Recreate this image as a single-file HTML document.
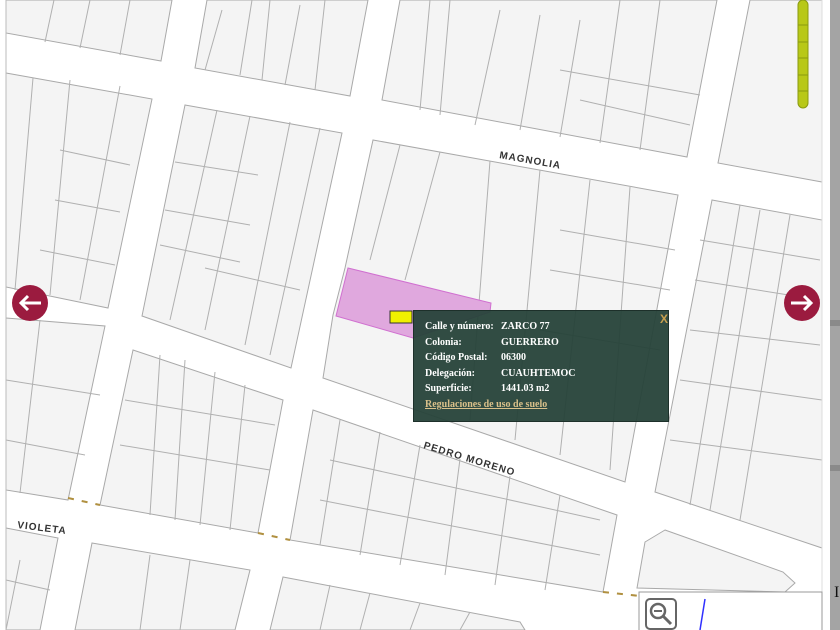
<!DOCTYPE html>
<html><head><meta charset="utf-8"><style>
html,body{margin:0;padding:0;width:840px;height:630px;overflow:hidden;background:#fff;}
#map{position:absolute;left:0;top:0;width:840px;height:630px;}
.pop{position:absolute;left:413px;top:310px;width:256px;height:112px;background:rgba(38,66,57,0.95);border:1px solid #1d302a;box-sizing:border-box;font-family:"Liberation Serif",serif;font-weight:bold;font-size:10px;color:#fff;}
.pop .r{position:absolute;left:11px;white-space:nowrap;}
.pop .v{position:absolute;left:87px;white-space:nowrap;}
.pop a{color:#d9c08a;text-decoration:underline;}
.x{position:absolute;left:246px;top:1px;color:#c8a050;font-size:12px;font-family:"Liberation Sans",sans-serif;font-weight:bold;}
</style></head><body>
<svg id="map" width="840" height="630" viewBox="0 0 840 630">
<rect x="0" y="0" width="840" height="630" fill="#fff"/>
<g fill="#f4f4f4" stroke="#a9a9a9" stroke-width="1">
<polygon points="6,0 172,0 161,61 6,33"/>
<polygon points="207,0 368,0 350,96 195,68"/>
<polygon points="400,0 717,0 687,157 382,100"/>
<polygon points="750,0 822,0 822,182 718,163"/>
<polygon points="6,73 152,99 108,308 6,287"/>
<polygon points="185,105 342,133 291,368 142,316"/>
<polygon points="373,140 678,195 625,482 323,378 333,315 345,268"/>
<polygon points="712,200 822,220 822,548 655,492"/>
<polygon points="6,318 105,326 68,500 6,490"/>
<polygon points="133,350 283,400 258,533 100,505"/>
<polygon points="313,410 617,515 603,592 290,540"/>
<polygon points="6,528 58,538 40,630 6,630"/>
<polygon points="92,543 250,570 235,630 75,630"/>
<polygon points="283,577 520,622 525,630 270,630"/>
<path d="M665,530 L783,572 L795,583 L785,592 L637,588 L645,542 Z"/>
</g>
<g fill="none" stroke="#b0b0b0" stroke-width="1">
<path d="M54,0 L45,42 M90,0 L80,48 M130,0 L120,55 M222,10 L205,70 M252,0 L240,75 M270,0 L262,80 M300,5 L285,85 M325,0 L315,90"/>
<path d="M430,0 L420,110 M450,0 L440,115 M500,10 L475,125 M540,15 L520,130 M580,20 L560,137 M620,0 L600,143 M660,0 L640,150 M560,70 L700,95 M580,100 L690,125"/>
<path d="M33,78 L15,290 M70,80 L50,295 M120,86 L80,300 M60,150 L130,165 M55,200 L120,212 M40,250 L115,265"/>
<path d="M217,110 L170,320 M250,116 L205,330 M290,122 L245,345 M320,128 L270,355 M175,162 L258,175 M165,210 L250,225 M160,245 L240,262 M205,268 L300,290"/>
<path d="M400,145 L370,260 M440,152 L405,280 M490,161 L470,420 M540,170 L515,440 M590,180 L560,455 M630,187 L610,470 M560,230 L675,250 M550,270 L670,290 M540,330 L660,350"/>
<path d="M740,205 L690,505 M760,210 L710,510 M790,215 L740,520 M700,240 L820,260 M695,280 L820,300 M690,330 L820,345 M680,380 L822,400 M670,440 L822,460"/>
<path d="M40,320 L20,493 M6,380 L100,395 M6,440 L85,455"/>
<path d="M160,355 L150,515 M185,360 L175,520 M215,372 L200,525 M245,385 L230,530 M125,400 L275,425 M120,445 L270,470"/>
<path d="M340,420 L320,545 M380,432 L360,555 M420,445 L400,565 M460,459 L445,575 M510,476 L495,585 M560,495 L545,590 M330,460 L600,520 M320,500 L600,555"/>
<path d="M20,560 L6,630 M6,580 L50,590 M150,555 L140,630 M190,560 L180,630 M330,585 L320,630 M370,593 L360,630 M420,603 L410,630 M470,612 L460,630"/>
</g>
<polygon points="348,268 491,303 490,312 413,338 336,316" fill="#e0a8de" stroke="#d070d0" stroke-width="1"/>
<line x1="6" y1="0" x2="6" y2="630" stroke="#bbb" stroke-width="1"/>
<line x1="822" y1="0" x2="822" y2="630" stroke="#ddd" stroke-width="1"/>
<rect x="830" y="0" width="10" height="630" fill="#a4a4a4"/>
<rect x="830" y="320" width="10" height="6" fill="#8a8a8a"/>
<rect x="830" y="465" width="10" height="6" fill="#8a8a8a"/>
<rect x="828" y="0" width="2" height="630" fill="#fff"/>
<g stroke="#b09040" stroke-width="2" stroke-dasharray="6,8">
<line x1="68" y1="498" x2="100" y2="505"/>
<line x1="258" y1="533" x2="290" y2="540"/>
<line x1="603" y1="592" x2="640" y2="596"/>
</g>
<rect x="798" y="0" width="10" height="108" rx="5" fill="#b8c818" stroke="#8a9a10" stroke-width="1"/>
<g stroke="#8a9a10" stroke-width="1"><line x1="798" y1="25" x2="808" y2="25"/><line x1="798" y1="42" x2="808" y2="42"/><line x1="798" y1="58" x2="808" y2="58"/><line x1="798" y1="75" x2="808" y2="75"/><line x1="798" y1="91" x2="808" y2="91"/></g>
<g font-family="Liberation Sans, sans-serif" font-weight="bold" font-size="10" fill="#333" letter-spacing="1">
<text transform="translate(499,158) rotate(10)">MAGNOLIA</text>
<text transform="translate(423,448) rotate(17)">PEDRO MORENO</text>
<text transform="translate(17,528) rotate(7)">VIOLETA</text>
</g>
<circle cx="30" cy="303" r="18" fill="#9b1b3f"/>
<path d="M41,303 H21 M28,296 L21,303 L28,310" stroke="#fff" stroke-width="3" fill="none"/>
<circle cx="802" cy="303" r="18" fill="#9b1b3f"/>
<path d="M791,303 H811 M804,296 L811,303 L804,310" stroke="#fff" stroke-width="3" fill="none"/>
<rect x="390" y="311" width="22" height="12" fill="#f0f000" stroke="#333" stroke-width="1"/>
<rect x="639" y="592" width="183" height="40" fill="#fff" stroke="#999" stroke-width="1"/>
<rect x="646" y="599" width="30" height="30" rx="4" fill="#fff" stroke="#666" stroke-width="2"/>
<circle cx="658" cy="611" r="7" fill="none" stroke="#666" stroke-width="2.5"/>
<line x1="654" y1="611" x2="662" y2="611" stroke="#666" stroke-width="2"/>
<line x1="663" y1="616" x2="671" y2="624" stroke="#666" stroke-width="3"/>
<line x1="705" y1="599" x2="700" y2="630" stroke="#3030ff" stroke-width="1.5"/>
<text x="834" y="597" font-family="Liberation Serif, serif" font-size="16" fill="#111">I</text>
</svg>
<div class="pop">
<span class="x">X</span>
<span class="r" style="top:10px">Calle y número:</span><span class="v" style="top:10px">ZARCO 77</span>
<span class="r" style="top:26px">Colonia:</span><span class="v" style="top:26px">GUERRERO</span>
<span class="r" style="top:41px">Código Postal:</span><span class="v" style="top:41px">06300</span>
<span class="r" style="top:57px">Delegación:</span><span class="v" style="top:57px">CUAUHTEMOC</span>
<span class="r" style="top:72px">Superficie:</span><span class="v" style="top:72px">1441.03 m2</span>
<span class="r" style="top:88px"><a>Regulaciones de uso de suelo</a></span>
</div>
</body></html>
